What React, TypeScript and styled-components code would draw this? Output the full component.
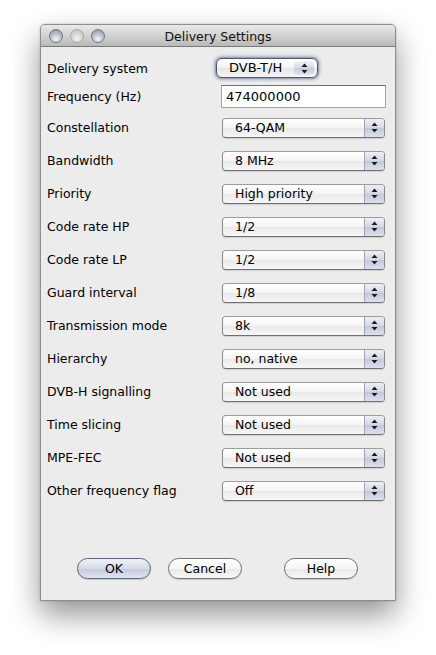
import React from "react";
import styled, { createGlobalStyle } from "styled-components";

const GlobalStyle = createGlobalStyle`
  html, body { margin: 0; padding: 0; background: #ffffff; }
  body {
    font-family: "DejaVu Sans", "Liberation Sans", sans-serif;
    font-size: 12.5px;
    color: #000;
  }
`;

const Page = styled.div`
  width: 436px;
  height: 655px;
  box-sizing: border-box;
  padding: 24px 0 0 40px;
  overflow: hidden;
`;

const Window = styled.div`
  width: 356px;
  height: 577px;
  box-sizing: border-box;
  display: flex;
  flex-direction: column;
  background: #ececec;
  border: 1px solid #8e8e8e;
  border-radius: 5px 5px 0 0;
  box-shadow: 0 14px 30px rgba(0, 0, 0, 0.42), 0 0 2px rgba(0, 0, 0, 0.25);
`;

const TitleBar = styled.div`
  height: 21px;
  display: grid;
  grid-template-columns: 1fr auto 1fr;
  align-items: center;
  background: linear-gradient(#eaeaea, #d2d2d2 50%, #b9b9b9);
  border-bottom: 1px solid #7a7a7a;
  border-radius: 4px 4px 0 0;
`;

const Lights = styled.div`
  display: flex;
  gap: 7px;
  padding-left: 8px;
`;

const Light = styled.span<{ $dim?: boolean }>`
  width: 14px;
  height: 14px;
  border-radius: 50%;
  box-sizing: border-box;
  border: 1px solid ${p => (p.$dim ? "#a9a9a9" : "#737883")};
  background: ${p =>
    p.$dim
      ? "radial-gradient(circle at 50% 70%, #f2f2f2, #d0d0d0 60%, #bdbdbd)"
      : "radial-gradient(circle at 50% 75%, #f4f6fa, #b4b9c6 55%, #868b98)"};
`;

const Title = styled.div`
  font-size: 12.5px;
  color: #111;
  padding-top: 1px;
`;

const Content = styled.div`
  flex: 1;
  display: flex;
  flex-direction: column;
  padding: 7px 10px 0 6px;
`;

const Row = styled.div<{ $h: number }>`
  height: ${p => p.$h}px;
  display: grid;
  grid-template-columns: 175px 1fr;
  align-items: center;
`;

const Label = styled.span`
  white-space: nowrap;
`;

const Arrows = () => (
  <svg width="7" height="11" viewBox="0 0 7 11">
    <path d="M3.5 0.5 L6.5 4 L0.5 4 Z" fill="#1c1c1c" />
    <path d="M0.5 7 L6.5 7 L3.5 10.5 Z" fill="#1c1c1c" />
  </svg>
);

const Combo = styled.div`
  width: 163px;
  height: 20px;
  box-sizing: border-box;
  display: flex;
  border: 1px solid #8a8a8a;
  border-top-color: #9c9c9c;
  border-bottom-color: #6f6f6f;
  border-radius: 4px;
  overflow: hidden;
  background: linear-gradient(#ffffff, #f4f4f4 50%, #e9e9e9 51%, #f7f7f7);
  box-shadow: 0 1px 1px rgba(0, 0, 0, 0.12);
`;

const ComboText = styled.span`
  flex: 1;
  padding-left: 12px;
  line-height: 18px;
`;

const ComboArrow = styled.span`
  width: 19px;
  display: flex;
  align-items: center;
  justify-content: center;
  border-left: 1px solid #9fa4b8;
  background: linear-gradient(#eef0f6, #d3d7e4 50%, #c3c8d8 51%, #dde1ee);
`;

const SystemPopup = styled.div`
  margin-left: -6px;
  width: 102px;
  height: 20px;
  box-sizing: border-box;
  display: flex;
  border: 1px solid #52586a;
  border-radius: 6px;
  background: linear-gradient(#ffffff, #f3f3f3 50%, #e6e6e6 51%, #f6f6f6);
  box-shadow: 0 0 0 1px #9aa3bb, 0 0 3px 2px rgba(110, 125, 165, 0.55);
`;

const SystemText = styled.span`
  flex: 1;
  padding-left: 12px;
  line-height: 18px;
  font-size: 13px;
`;

const SystemArrow = styled.span`
  width: 20px;
  display: flex;
  align-items: center;
  justify-content: center;
  margin: 2px 3px 2px 0;
  border-radius: 4px;
  background: linear-gradient(#f2f3f8, #d6d9e5 50%, #c6cad9 51%, #e0e3ee);
`;

const TextField = styled.div`
  margin-left: -1px;
  width: 165px;
  height: 23px;
  box-sizing: border-box;
  background: #fff;
  border: 1px solid #a3a3a3;
  border-top-color: #6e6e6e;
  padding-left: 4px;
  line-height: 21px;
  font-size: 13px;
`;

const Spacer = styled.div`
  flex: 1;
`;

const ButtonBar = styled.div`
  display: flex;
  gap: 17px;
  padding: 0 27px 0 30px;
  margin-bottom: 21px;
`;

const Button = styled.button<{ $primary?: boolean; $push?: boolean }>`
  width: 74px;
  height: 21px;
  box-sizing: border-box;
  margin-left: ${p => (p.$push ? "auto" : "0")};
  border-radius: 11px;
  border: 1px solid ${p => (p.$primary ? "#5d6479" : "#717171")};
  font-family: "DejaVu Sans", "Liberation Sans", sans-serif;
  font-size: 12.5px;
  color: #000;
  padding: 0;
  background: ${p =>
    p.$primary
      ? "linear-gradient(#eef1f8, #d6dbe8 50%, #c4cadb 51%, #dfe4f0)"
      : "linear-gradient(#ffffff, #f5f5f5 50%, #e8e8e8 51%, #f8f8f8)"};
  box-shadow: 0 1px 1px rgba(0, 0, 0, 0.15);
`;

const combos: [string, string][] = [
  ["Constellation", "64-QAM"],
  ["Bandwidth", "8 MHz"],
  ["Priority", "High priority"],
  ["Code rate HP", "1/2"],
  ["Code rate LP", "1/2"],
  ["Guard interval", "1/8"],
  ["Transmission mode", "8k"],
  ["Hierarchy", "no, native"],
  ["DVB-H signalling", "Not used"],
  ["Time slicing", "Not used"],
  ["MPE-FEC", "Not used"],
  ["Other frequency flag", "Off"],
];

export default function App() {
  return (
    <Page>
      <GlobalStyle />
      <Window>
        <TitleBar>
          <Lights>
            <Light />
            <Light $dim />
            <Light />
          </Lights>
          <Title>Delivery Settings</Title>
          <span />
        </TitleBar>
        <Content>
          <Row $h={28}>
            <Label>Delivery system</Label>
            <SystemPopup>
              <SystemText>DVB-T/H</SystemText>
              <SystemArrow>
                <Arrows />
              </SystemArrow>
            </SystemPopup>
          </Row>
          <Row $h={29}>
            <Label>Frequency (Hz)</Label>
            <TextField>474000000</TextField>
          </Row>
          {combos.map(([label, value]) => (
            <Row $h={33} key={label}>
              <Label>{label}</Label>
              <Combo>
                <ComboText>{value}</ComboText>
                <ComboArrow>
                  <Arrows />
                </ComboArrow>
              </Combo>
            </Row>
          ))}
          <Spacer />
          <ButtonBar>
            <Button $primary>OK</Button>
            <Button>Cancel</Button>
            <Button $push>Help</Button>
          </ButtonBar>
        </Content>
      </Window>
    </Page>
  );
}
